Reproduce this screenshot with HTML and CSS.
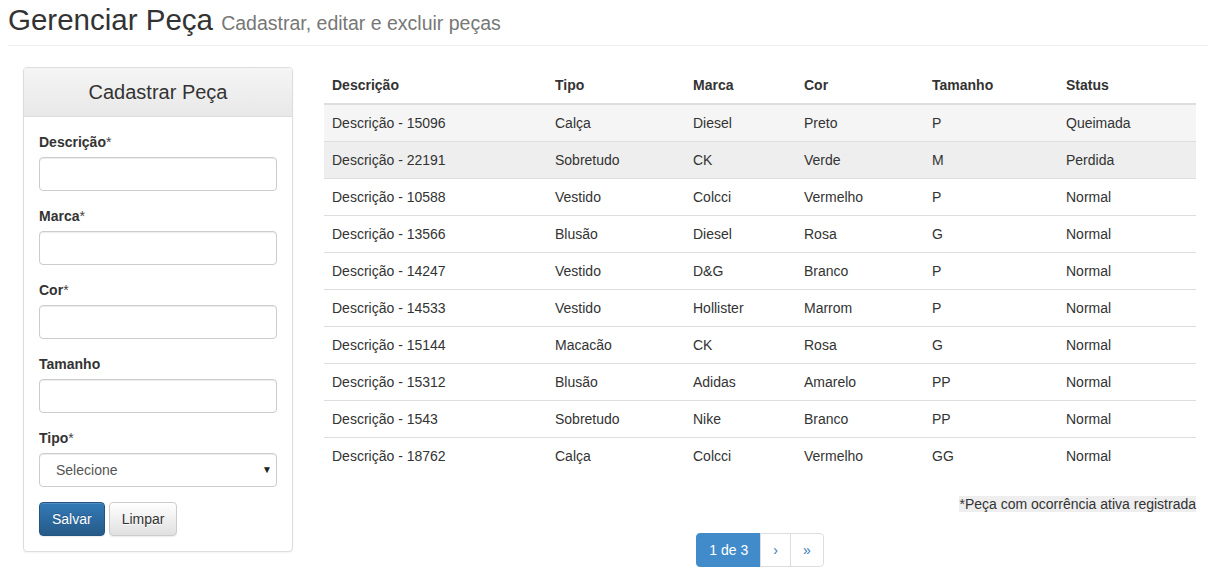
FILE: index.html
```html
<!DOCTYPE html>
<html lang="pt-BR">
<head>
<meta charset="utf-8">
<title>Gerenciar Peça</title>
<link rel="stylesheet" href="styles.css">
</head>
<body>
<div class="page-header">
  <h2 class="title">Gerenciar Peça <small>Cadastrar, editar e excluir peças</small></h2>
</div>
<div class="main">
  <aside class="panel">
    <div class="panel-heading"><h3 class="panel-title">Cadastrar Peça</h3></div>
    <form class="panel-body">
      <div class="form-group">
        <label>Descrição<span class="req">*</span></label>
        <input class="form-control" type="text">
      </div>
      <div class="form-group">
        <label>Marca<span class="req">*</span></label>
        <input class="form-control" type="text">
      </div>
      <div class="form-group">
        <label>Cor<span class="req">*</span></label>
        <input class="form-control" type="text">
      </div>
      <div class="form-group">
        <label>Tamanho</label>
        <input class="form-control" type="text">
      </div>
      <div class="form-group">
        <label>Tipo<span class="req">*</span></label>
        <div class="select-wrap">
          <select class="form-control select"><option>Selecione</option></select>
          <span class="caret">&#9660;</span>
        </div>
      </div>
      <div class="buttons">
        <button type="button" class="btn btn-primary">Salvar</button>
        <button type="button" class="btn btn-default">Limpar</button>
      </div>
    </form>
  </aside>
  <section class="content">
    <table class="table">
      <colgroup>
        <col class="c1"><col class="c2"><col class="c3"><col class="c4"><col class="c5"><col class="c6">
      </colgroup>
      <thead>
        <tr><th>Descrição</th><th>Tipo</th><th>Marca</th><th>Cor</th><th>Tamanho</th><th>Status</th></tr>
      </thead>
      <tbody>
        <tr class="hover"><td>Descrição - 15096</td><td>Calça</td><td>Diesel</td><td>Preto</td><td>P</td><td>Queimada</td></tr>
        <tr class="active"><td>Descrição - 22191</td><td>Sobretudo</td><td>CK</td><td>Verde</td><td>M</td><td>Perdida</td></tr>
        <tr><td>Descrição - 10588</td><td>Vestido</td><td>Colcci</td><td>Vermelho</td><td>P</td><td>Normal</td></tr>
        <tr><td>Descrição - 13566</td><td>Blusão</td><td>Diesel</td><td>Rosa</td><td>G</td><td>Normal</td></tr>
        <tr><td>Descrição - 14247</td><td>Vestido</td><td>D&amp;G</td><td>Branco</td><td>P</td><td>Normal</td></tr>
        <tr><td>Descrição - 14533</td><td>Vestido</td><td>Hollister</td><td>Marrom</td><td>P</td><td>Normal</td></tr>
        <tr><td>Descrição - 15144</td><td>Macacão</td><td>CK</td><td>Rosa</td><td>G</td><td>Normal</td></tr>
        <tr><td>Descrição - 15312</td><td>Blusão</td><td>Adidas</td><td>Amarelo</td><td>PP</td><td>Normal</td></tr>
        <tr><td>Descrição - 1543</td><td>Sobretudo</td><td>Nike</td><td>Branco</td><td>PP</td><td>Normal</td></tr>
        <tr><td>Descrição - 18762</td><td>Calça</td><td>Colcci</td><td>Vermelho</td><td>GG</td><td>Normal</td></tr>
      </tbody>
    </table>
    <p class="note"><span class="note-mark">*Peça com ocorrência ativa registrada</span></p>
    <nav class="pager">
      <ul class="pagination">
        <li class="active"><a href="#">1 de 3</a></li>
        <li><a href="#">&rsaquo;</a></li>
        <li><a href="#">&raquo;</a></li>
      </ul>
    </nav>
  </section>
</div>
</body>
</html>
```
FILE: styles.css
```css
* { box-sizing: border-box; }
html, body { margin: 0; padding: 0; }
body {
  padding-left: 8px;
  font-family: "Liberation Sans", Arial, Helvetica, sans-serif;
  font-size: 14px;
  line-height: 20px;
  color: #333;
  background: #fff;
  width: 1208px;
}
.page-header {
  border-bottom: 1px solid #eee;
  padding-bottom: 9px;
  margin: 0 0 21px 0;
}
.title {
  margin: 3px 0 0 0;
  font-size: 29.5px;
  line-height: 33px;
  font-weight: 500;
  color: #333;
}
.title small {
  font-size: 19.5px;
  line-height: 1;
  color: #777;
  font-weight: 400;
}
.main {
  display: flex;
  align-items: flex-start;
  padding-left: 15px;
  gap: 31px;
}
.panel {
  width: 270px;
  flex: none;
  border: 1px solid #ddd;
  border-radius: 4px;
  background: #fff;
  box-shadow: 0 1px 2px rgba(0,0,0,.05);
}
.panel-heading {
  background: linear-gradient(to bottom, #f5f5f5 0, #e8e8e8 100%);
  border-bottom: 1px solid #ddd;
  border-radius: 3px 3px 0 0;
  padding: 13px 15px;
  text-align: center;
}
.panel-title {
  margin: 0;
  font-size: 20px;
  line-height: 22px;
  font-weight: 400;
  color: #333;
}
.panel-body { padding: 15px; margin: 0; }
.form-group { margin-bottom: 15px; }
.form-group label {
  display: block;
  font-weight: 700;
  margin-bottom: 5px;
  line-height: 20px;
}
.req { font-weight: 400; color: #444; }
.form-control {
  display: block;
  width: 100%;
  height: 34px;
  padding: 6px 12px;
  font-family: inherit;
  font-size: 14px;
  color: #555;
  background: #fff;
  border: 1px solid #ccc;
  border-radius: 4px;
  box-shadow: inset 0 1px 1px rgba(0,0,0,.075);
}
.select-wrap { position: relative; }
.select {
  -webkit-appearance: none;
  appearance: none;
  padding-left: 16px;
}
.caret {
  position: absolute;
  right: 5px;
  top: 9px;
  font-size: 10px;
  line-height: 16px;
  color: #222;
  pointer-events: none;
}
.buttons { display: flex; gap: 4px; }
.btn {
  height: 34px;
  padding: 6px 12px;
  font-family: inherit;
  font-size: 14px;
  line-height: 20px;
  border-radius: 4px;
  border: 1px solid transparent;
  cursor: pointer;
}
.btn-primary {
  color: #fff;
  background: linear-gradient(to bottom, #337ab7 0, #265a88 100%);
  border-color: #245580;
  text-shadow: 0 -1px 0 rgba(0,0,0,.2);
  box-shadow: inset 0 1px 0 rgba(255,255,255,.15), 0 1px 1px rgba(0,0,0,.075);
}
.btn-default {
  color: #333;
  background: linear-gradient(to bottom, #fff 0, #e0e0e0 100%);
  border-color: #ccc;
  text-shadow: 0 1px 0 #fff;
  box-shadow: inset 0 1px 0 rgba(255,255,255,.15), 0 1px 1px rgba(0,0,0,.075);
}
.content { width: 872px; flex: none; }
.table {
  width: 100%;
  border-collapse: collapse;
  border-spacing: 0;
  table-layout: fixed;
  margin-bottom: 20px;
}
.c1 { width: 223px; }
.c2 { width: 138px; }
.c3 { width: 111px; }
.c4 { width: 128px; }
.c5 { width: 134px; }
.c6 { width: 138px; }
.table th, .table td {
  padding: 8px;
  line-height: 20px;
  text-align: left;
  vertical-align: top;
}
.table th {
  font-weight: 700;
  border-bottom: 2px solid #ddd;
}
.table td { border-top: 1px solid #ddd; }
.table tr.hover td { background: #f5f5f5; }
.table tr.active td { background: #eee; }
.note {
  margin: 0;
  text-align: right;
  line-height: 20px;
}
.note-mark { background: #eee; }
.pager { display: flex; justify-content: center; }
.pagination {
  display: flex;
  list-style: none;
  padding: 0;
  margin: 19px 0 0 0;
}
.pagination a {
  display: block;
  padding: 6px 12px;
  line-height: 20px;
  color: #337ab7;
  text-decoration: none;
  background: #fff;
  border: 1px solid #ddd;
  margin-left: -1px;
}
.pagination li:first-child a {
  margin-left: 0;
  border-radius: 4px 0 0 4px;
}
.pagination li:last-child a { border-radius: 0 4px 4px 0; }
.pagination li.active a {
  color: #fff;
  background: #428bca;
  border-color: #428bca;
}
```
